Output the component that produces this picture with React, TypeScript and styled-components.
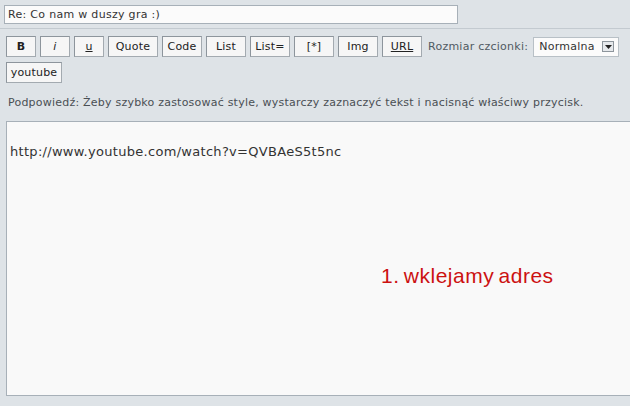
import styled, { createGlobalStyle } from "styled-components";

const GlobalStyle = createGlobalStyle`
  html, body {
    margin: 0;
    padding: 0;
    overflow: hidden;
    background: #dee3e7;
  }
  body {
    font-family: "DejaVu Sans", Verdana, sans-serif;
  }
`;

const tags = [
  { label: "B", width: 30, bold: true },
  { label: "i", width: 30, italic: true },
  { label: "u", width: 30, underline: true },
  { label: "Quote", width: 50 },
  { label: "Code", width: 40 },
  { label: "List", width: 40 },
  { label: "List=", width: 40 },
  { label: "[*]", width: 40 },
  { label: "Img", width: 40 },
  { label: "URL", width: 40, underline: true },
];

export default function App() {
  return (
    <Page>
      <GlobalStyle />
      <SubjectBar>
        <SubjectInput readOnly value="Re: Co nam w duszy gra :)" />
      </SubjectBar>

      <Toolbar>
        {tags.map((t) => (
          <TagButton
            key={t.label}
            $width={t.width}
            $bold={t.bold}
            $italic={t.italic}
            $underline={t.underline}
          >
            {t.label}
          </TagButton>
        ))}
        <SizeLabel>Rozmiar czcionki:</SizeLabel>
        <SizeSelect>
          <span>Normalna</span>
          <SelectArrow>
            <svg width="7" height="4" viewBox="0 0 7 4">
              <path d="M0 0h7L3.5 4z" fill="#222" />
            </svg>
          </SelectArrow>
        </SizeSelect>
        <TagButton>youtube</TagButton>
      </Toolbar>

      <Hint>
        Podpowiedź: Żeby szybko zastosować style, wystarczy zaznaczyć tekst i
        nacisnąć właściwy przycisk.
      </Hint>

      <EditorWrap>
        <MessageArea
          readOnly
          defaultValue={"\nhttp://www.youtube.com/watch?v=QVBAeS5t5nc"}
        />
        <Annotation>1. wklejamy adres</Annotation>
      </EditorWrap>
    </Page>
  );
}

const Page = styled.div`
  width: 630px;
  height: 406px;
  background: #dee3e7;
  color: #333;
`;

const SubjectBar = styled.div`
  padding: 5px 0 4px 4px;
  border-bottom: 1px solid #c3cad0;
`;

const SubjectInput = styled.input`
  display: block;
  box-sizing: border-box;
  width: 454px;
  height: 19px;
  margin: 0;
  padding: 0 3px;
  border: 1px solid #a7b0b8;
  background: #fbfbfb;
  font-family: "DejaVu Sans", Verdana, sans-serif;
  font-size: 11px;
  letter-spacing: 0.3px;
  color: #333;
  outline: none;
`;

const Toolbar = styled.div`
  display: flex;
  flex-wrap: wrap;
  align-items: center;
  column-gap: 4px;
  row-gap: 5px;
  padding: 7px 0 0 6px;
  width: 620px;
`;

interface TagButtonProps {
  $width?: number;
  $bold?: boolean;
  $italic?: boolean;
  $underline?: boolean;
}

const TagButton = styled.button<TagButtonProps>`
  box-sizing: border-box;
  height: 21px;
  width: ${({ $width }) => ($width ? `${$width}px` : "56px")};
  padding: 0;
  margin: 0;
  border: 1px solid #8d959c;
  border-right-color: #a3aab0;
  border-bottom-color: #a3aab0;
  background: #f6f6f6;
  font-family: "DejaVu Sans", Verdana, sans-serif;
  font-size: 11px;
  letter-spacing: 0.2px;
  color: #222;
  font-weight: ${({ $bold }) => ($bold ? "bold" : "normal")};
  font-style: ${({ $italic }) => ($italic ? "italic" : "normal")};
  text-decoration: ${({ $underline }) => ($underline ? "underline" : "none")};
  line-height: 19px;
`;

const SizeLabel = styled.span`
  font-size: 11px;
  letter-spacing: 0.25px;
  color: #505a62;
  margin-left: 2px;
  margin-right: 1px;
`;

const SizeSelect = styled.div`
  box-sizing: border-box;
  display: flex;
  align-items: center;
  justify-content: space-between;
  width: 86px;
  height: 20px;
  padding: 0 4px 0 5px;
  border: 1px solid #b8c0c6;
  background: #fbfbfb;
  font-size: 11px;
  letter-spacing: 0.25px;
  color: #333;
`;

const SelectArrow = styled.div`
  box-sizing: border-box;
  display: flex;
  align-items: center;
  justify-content: center;
  width: 12px;
  height: 11px;
  border: 1px solid #8d959c;
  background: #e6e9ec;
`;

const Hint = styled.div`
  margin: 13px 0 0 8px;
  font-size: 11px;
  letter-spacing: 0.22px;
  line-height: 14px;
  color: #4a4f54;
`;

const EditorWrap = styled.div`
  position: relative;
  margin: 11px 0 0 6px;
`;

const MessageArea = styled.textarea`
  display: block;
  box-sizing: border-box;
  width: 640px;
  height: 275px;
  margin: 0;
  padding: 4px 3px 3px;
  border: 1px solid #a7b0b8;
  background: #f9f9f9;
  font-family: "DejaVu Sans", Verdana, sans-serif;
  font-size: 13px;
  letter-spacing: 0.3px;
  line-height: 17px;
  color: #333;
  resize: none;
  outline: none;
  overflow: hidden;
`;

const Annotation = styled.div`
  position: absolute;
  left: 375px;
  top: 143px;
  font-family: "Liberation Sans", Arial, sans-serif;
  font-size: 21px;
  color: #cc1111;
  letter-spacing: 0.5px;
  word-spacing: -2px;
`;
